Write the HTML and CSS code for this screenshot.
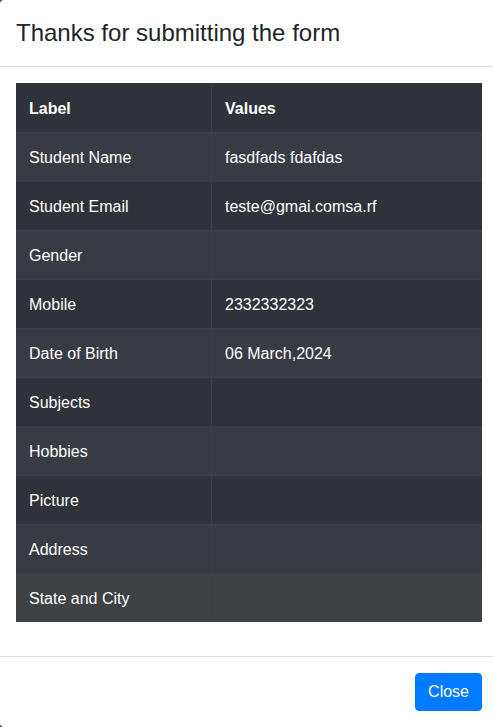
FILE: index.html
```html
<!DOCTYPE html>
<html lang="en">
<head>
<meta charset="utf-8">
<title>Thanks for submitting the form</title>
<link rel="stylesheet" href="styles.css">
</head>
<body>
<div class="modal">
  <div class="modal-header">
    <h4 class="modal-title">Thanks for submitting the form</h4>
  </div>
  <div class="modal-body">
    <table class="result-table">
      <thead>
        <tr><th>Label</th><th>Values</th></tr>
      </thead>
      <tbody>
        <tr class="striped"><td>Student Name</td><td>fasdfads fdafdas</td></tr>
        <tr><td>Student Email</td><td>teste@gmai.comsa.rf</td></tr>
        <tr class="striped"><td>Gender</td><td></td></tr>
        <tr><td>Mobile</td><td>2332332323</td></tr>
        <tr class="striped"><td>Date of Birth</td><td>06 March,2024</td></tr>
        <tr><td>Subjects</td><td></td></tr>
        <tr class="striped"><td>Hobbies</td><td></td></tr>
        <tr><td>Picture</td><td></td></tr>
        <tr class="striped"><td>Address</td><td></td></tr>
        <tr class="hovered"><td>State and City</td><td></td></tr>
      </tbody>
    </table>
  </div>
  <div class="modal-footer">
    <button class="btn-close" type="button">Close</button>
  </div>
</div>
</body>
</html>
```

FILE: styles.css
```css
html, body {
  margin: 0;
  padding: 0;
  overflow: hidden;
  background: #3b3d40;
}

body {
  font-family: "Liberation Sans", Arial, sans-serif;
  font-size: 16px;
  line-height: 24px;
  color: #212529;
}

.modal {
  width: 498px;
  height: 727px;
  background: #ffffff;
  border-radius: 4px;
  display: flex;
  flex-direction: column;
  overflow: hidden;
}

.modal-header {
  padding: 16px;
  border-bottom: 1px solid #dee2e6;
}

.modal-title {
  margin: 0;
  font-size: 24px;
  font-weight: 400;
  line-height: 34px;
  color: #212529;
}

.modal-body {
  padding: 16px;
}

.result-table {
  width: 100%;
  border-collapse: collapse;
  background: #2f3238;
  color: #ffffff;
}

.result-table th,
.result-table td {
  text-align: left;
  padding: 13px 12px 11px 13px;
  line-height: 24px;
  border-top: 1px solid #3b3f46;
  vertical-align: top;
}

.result-table thead th {
  border-top: 1px solid #2f3238;
  font-weight: 700;
}

.result-table th:first-child,
.result-table td:first-child {
  width: 170px;
  border-right: 1px solid #3b3f46;
}

.result-table tr.striped {
  background: #383b42;
}

.result-table tr.hovered {
  background: #3e4245;
}

.modal-footer {
  margin-top: auto;
  border-top: 1px solid #dee2e6;
  padding: 16px;
  display: flex;
  justify-content: flex-end;
}

.btn-close {
  font-family: "Liberation Sans", Arial, sans-serif;
  font-size: 16px;
  line-height: 24px;
  padding: 6px 12px;
  border: 1px solid #007bff;
  border-radius: 4px;
  background: #007bff;
  color: #ffffff;
  cursor: pointer;
}
```
